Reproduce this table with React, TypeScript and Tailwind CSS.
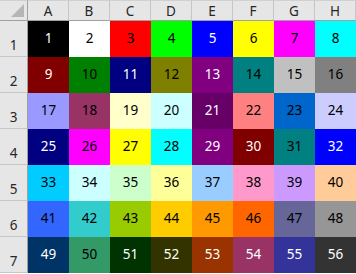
import React from "react";

const colors: string[] = [
  "#000000", "#FFFFFF", "#FF0000", "#00FF00", "#0000FF", "#FFFF00", "#FF00FF", "#00FFFF",
  "#800000", "#008000", "#000080", "#808000", "#800080", "#008080", "#C0C0C0", "#808080",
  "#9999FF", "#993366", "#FFFFCC", "#CCFFFF", "#660066", "#FF8080", "#0066CC", "#CCCCFF",
  "#000080", "#FF00FF", "#FFFF00", "#00FFFF", "#800080", "#800000", "#008080", "#0000FF",
  "#00CCFF", "#CCFFFF", "#CCFFCC", "#FFFF99", "#99CCFF", "#FF99CC", "#CC99FF", "#FFCC99",
  "#3366FF", "#33CCCC", "#99CC00", "#FFCC00", "#FF9900", "#FF6600", "#666699", "#969696",
  "#003366", "#339966", "#003300", "#333300", "#993300", "#993366", "#333399", "#333333",
];

const whiteText = new Set([1, 5, 9, 11, 13, 21, 25, 29, 30, 32, 49, 51, 52, 53, 54, 55, 56]);
const letters = ["A", "B", "C", "D", "E", "F", "G", "H"];

export default function App() {
  return (
    <div
      className="w-[356px] h-[274px] bg-white overflow-hidden"
      style={{ fontFamily: '"Noto Sans", "Liberation Sans", sans-serif' }}
    >
      <div className="grid grid-cols-[28px_repeat(8,41px)] grid-rows-[21px_repeat(7,36px)] text-[13.5px] leading-none">
        <div className="relative bg-[#e6e6e6] border-t border-[#d0d0d0] border-b border-b-[#a0a0a0] border-r border-r-[#a0a0a0]">
          <svg className="absolute right-[3px] bottom-[3px]" width="13" height="13" viewBox="0 0 13 13">
            <polygon points="13,0 13,13 0,13" fill="#b5b5b5" />
          </svg>
        </div>
        {letters.map((l) => (
          <div
            key={l}
            className="flex items-center justify-center pt-[2px] bg-[#e6e6e6] text-[#262626] border-t border-[#d0d0d0] border-b border-b-[#a0a0a0] border-r border-r-[#c6c6c6]"
          >
            {l}
          </div>
        ))}
        {Array.from({ length: 7 }).map((_, r) => (
          <React.Fragment key={r}>
            <div className="flex items-end justify-center pb-[4px] bg-[#e6e6e6] text-[#262626] border-r border-r-[#a0a0a0] border-b border-b-[#c6c6c6]">
              {r + 1}
            </div>
            {Array.from({ length: 8 }).map((_, c) => {
              const n = r * 8 + c + 1;
              return (
                <div
                  key={c}
                  className={`flex items-center justify-center ${whiteText.has(n) ? "text-white" : "text-black"}`}
                  style={{ backgroundColor: colors[n - 1] }}
                >
                  {n}
                </div>
              );
            })}
          </React.Fragment>
        ))}
      </div>
    </div>
  );
}
